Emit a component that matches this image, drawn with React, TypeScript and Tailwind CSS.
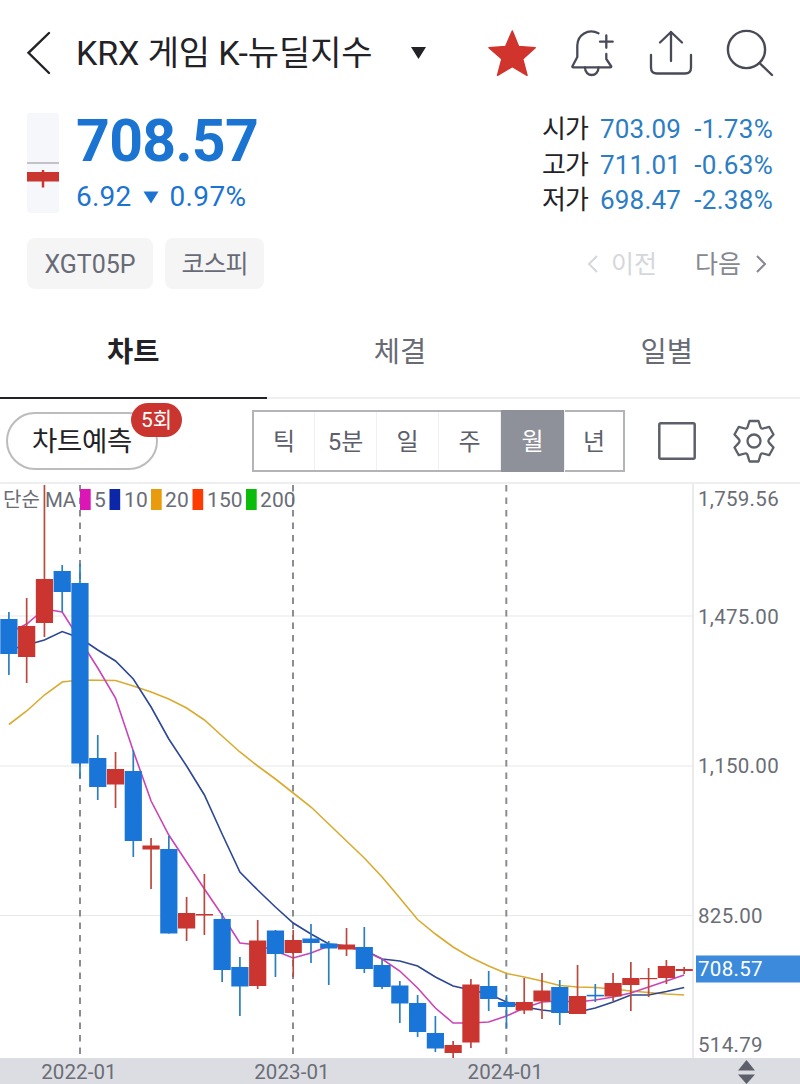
import React, { useState } from 'react';

type Candle = [open: number, close: number, high: number, low: number, dir: 'up' | 'down'];

const UP = '#cb352f';
const DOWN = '#1976d8';
const STEP = 17.77;
const FIRST_X = 8.9;

// body top, body bottom, wick top, wick bottom
const CANDLES: Candle[] = [
    [619, 654, 612, 675, 'down'],
    [626, 657, 598, 683, 'up'],
    [579, 623, 485, 637, 'up'],
    [571, 592, 565, 612, 'down'],
    [583, 763.5, 564, 778, 'down'],
    [758, 787, 735, 800, 'down'],
    [769, 784.5, 752, 808, 'up'],
    [771, 841, 750, 857, 'down'],
    [845.5, 849.5, 838, 889, 'up'],
    [849, 933.5, 836, 933.5, 'down'],
    [913, 928.5, 897, 941, 'up'],
    [914, 915.5, 874, 935, 'up'],
    [919, 970, 913, 982, 'down'],
    [967, 986.5, 957, 1016, 'down'],
    [940.5, 986, 920, 989, 'up'],
    [930.5, 954, 930, 977, 'down'],
    [940, 953, 930, 977, 'up'],
    [938.5, 943, 924, 963, 'down'],
    [943.5, 948.5, 941, 985, 'down'],
    [944.5, 949.5, 928, 956, 'up'],
    [947, 969, 927, 973, 'down'],
    [965, 987, 959, 989, 'down'],
    [985.5, 1003.5, 981, 1023, 'down'],
    [1003, 1032, 995, 1037, 'down'],
    [1033, 1048.5, 1016, 1052, 'down'],
    [1045, 1053, 1041, 1058, 'up'],
    [984.5, 1042.5, 979, 1048, 'up'],
    [986, 999, 971, 1011, 'down'],
    [1002, 1007, 995, 1028, 'down'],
    [1002, 1010.5, 978, 1014, 'up'],
    [990.5, 1001.5, 973, 1019, 'up'],
    [987, 1013, 980, 1025, 'down'],
    [996, 1014, 965, 1014, 'up'],
    [994.8, 996.4, 984, 1002, 'down'],
    [983, 996.5, 973, 1001, 'up'],
    [978, 985, 962, 1011, 'up'],
    [978, 979.2, 968, 997, 'up'],
    [966, 978, 960, 984, 'up'],
    [969, 971, 967, 974, 'up'],
];

const MA5 = [633, 624, 609, 612, 640, 668, 698, 751, 801, 835, 862, 889, 915, 943, 945, 951, 958, 953, 946, 947, 951, 959, 971, 988, 1008, 1023, 1023, 1022, 1016, 1008, 1002, 1001, 1002, 1000, 997, 993, 987, 981, 975];
const MA10 = [650, 645, 640, 631.5, 638, 650, 661, 679, 707, 739, 766, 795, 834, 872, 890, 907, 923, 934, 944, 946, 950, 959, 961, 966, 977, 986, 990, 994, 1002, 1007, 1010, 1012, 1012, 1008, 1002, 995, 995, 991.5, 987.5];
const MA20 = [724.5, 711, 695, 682, 680, 680.3, 680.5, 686, 692, 699, 708, 720, 736, 752, 766, 779, 793, 807, 824, 841, 858, 877, 898, 919.5, 934, 947, 957.5, 966, 973.5, 977, 981, 985.5, 987, 987.5, 989, 991, 992.5, 994, 995];

const GRID = [616, 766, 915.5];
const YEARS = [
    { x: 80, label: '2022-01' },
    { x: 293, label: '2023-01' },
    { x: 506.3, label: '2024-01' },
];
const AXIS = [
    { y: 505.5, label: '1,759.56' },
    { y: 623.5, label: '1,475.00' },
    { y: 773, label: '1,150.00' },
    { y: 922.5, label: '825.00' },
    { y: 1052, label: '514.79' },
];
const LEGEND = [
    { x: 80, textX: 94, color: '#db16b4', label: '5' },
    { x: 109.5, textX: 124, color: '#0c26a8', label: '10' },
    { x: 151, textX: 165, color: '#e89c0c', label: '20' },
    { x: 192.5, textX: 207, color: '#fb3b02', label: '150' },
    { x: 246, textX: 260, color: '#0bbd0b', label: '200' },
];

const QUOTES = [
    { label: '시가', price: '703.09', rate: '-1.73%' },
    { label: '고가', price: '711.01', rate: '-0.63%' },
    { label: '저가', price: '698.47', rate: '-2.38%' },
];

const toPoints = (values: number[]) =>
    values.map((y, i) => `${(FIRST_X + i * STEP).toFixed(1)},${y}`).join(' ');

const Header = () => (
    <header className="flex h-[106px] shrink-0 items-center text-[#484b57]">
        <button className="ml-[24px] w-[52px]">
            <svg width="28" height="44" viewBox="24 31 28 44" fill="none" stroke="#222227" strokeWidth="2.4" strokeLinecap="round">
                <path d="M49 33 28.500 52.800 49 73" />
            </svg>
        </button>
        <h1 className="w-[334px] whitespace-nowrap text-[34px] leading-none tracking-[-0.1px] text-[#222227]">
            KRX 게임 K-뉴딜지수
        </h1>
        <svg width="18" height="14" viewBox="410 46 18 14">
            <path d="M411 47h15l-7.500 12z" fill="#222227" />
        </svg>
        <button className="ml-[58px]">
            <svg width="52" height="50" viewBox="486 28 52 50">
                <path
                    d="m512.300 31 6.300 15.600 16.600 1.200-12.500 11.200 4.300 16.300-14.700-8.700-14.700 8.700 4.300-16.300L489 47.800l16.600-1.200z"
                    fill="#d0342c"
                    stroke="#d0342c"
                    strokeWidth="1.500"
                    strokeLinejoin="round"
                />
            </svg>
        </button>
        <button className="ml-[31px]">
            <svg width="46" height="50" viewBox="569 28 46 50" fill="none" stroke="currentColor" strokeWidth="2.300" strokeLinecap="round" strokeLinejoin="round">
                <path d="M598.500 33.200C588 28 577.500 35 577.300 45.500V57l-5 9.500q0 .8.800.8h37.200q1 0 1-.8L606.300 59v-5" />
                <path d="M606.300 35.500v12.300M600 41.700h12.700M585 67.500c0 10 13.500 10 13.500 0" />
            </svg>
        </button>
        <button className="ml-[32px]">
            <svg width="48" height="50" viewBox="647 28 48 50" fill="none" stroke="currentColor" strokeWidth="2.300" strokeLinecap="round" strokeLinejoin="round">
                <path d="M671 61V32M660 42.500 671 32l11 10.500M651 55v12.500q0 6 6 6h28q6 0 6-6V55" />
            </svg>
        </button>
        <button className="ml-[30px]">
            <svg width="50" height="50" viewBox="725 28 50 50" fill="none" stroke="currentColor" strokeWidth="2.400" strokeLinecap="round">
                <circle cx="746.500" cy="49.500" r="18.600" />
                <path d="m759.500 63 12.500 12" />
            </svg>
        </button>
    </header>
);

const Quote = () => (
    <section className="flex h-[118px] shrink-0 pl-[27px] pr-[27px] pt-[7px]">
        <svg className="shrink-0" width="32" height="100" viewBox="0 0 32 100">
            <rect width="32" height="100" rx="3" fill="#f5f7fb" />
            <path d="M0 50h32" stroke="#8c8f96" />
            <path d="M0 59h32v9.500H0z" fill={UP} />
            <path d="M16 57v17.500" stroke={UP} strokeWidth="2.500" />
        </svg>
        <div className="ml-[17px] flex-1 text-[#1b74d2]">
            <div className="mt-[1px] h-[58px] text-[59px] font-bold leading-[54px] tracking-[-0.7px]">708.57</div>
            <div className="flex h-[50px] items-center text-[28px] leading-none">
                <span className="tracking-[0.2px]">6.92</span>
                <svg className="ml-[12px] mr-[10px]" width="16" height="13" viewBox="0 0 16 13">
                    <path d="M.5.5h15L8 12.500z" fill="currentColor" />
                </svg>
                <span className="tracking-[0.4px]">0.97%</span>
            </div>
        </div>
        <div className="flex flex-col text-[26px] leading-[35.500px] -mt-px">
            {QUOTES.map(q => (
                <div key={q.label} className="flex h-[35.500px] whitespace-nowrap text-[#2b7dc4]">
                    <span className="w-[58px] tracking-[-0.8px] text-[#222227]">{q.label}</span>
                    <span className="w-[93px] tracking-[0.2px]">{q.price}</span>
                    <span className="w-[80px] text-right tracking-[0.3px]">{q.rate}</span>
                </div>
            ))}
        </div>
    </section>
);

const Chips = () => (
    <section className="flex h-[82px] shrink-0 items-start pt-[14px] text-[25px] text-[#686b75]">
        <span className="ml-[27px] flex h-[51px] w-[126px] items-center justify-center rounded-[8px] bg-[#f5f5f6] pt-[2px]">XGT05P</span>
        <span className="ml-[12px] flex h-[51px] w-[99px] items-center justify-center rounded-[8px] bg-[#f5f5f6] pt-[2px] tracking-[-1px]">코스피</span>
        <div className="ml-auto mr-[33px] flex h-[51px] items-center">
            <svg width="12" height="18" viewBox="0 0 12 18" fill="none" stroke="#d5d7db" strokeWidth="2">
                <path d="M10 1 2 9l8 8" />
            </svg>
            <span className="ml-[12px] w-[84px] pt-[2px] text-[#d5d7db]">이전</span>
            <span className="w-[50px] pt-[2px] text-[#868990]">다음</span>
            <svg className="ml-[10px]" width="12" height="18" viewBox="0 0 12 18" fill="none" stroke="#868990" strokeWidth="2">
                <path d="m2 1 8 8-8 8" />
            </svg>
        </div>
    </section>
);

const Tabs = () => {
    const [active, setActive] = useState('차트');
    return (
        <nav className="grid h-[93px] shrink-0 grid-cols-3 border-b-2 border-[#eceef0] text-[28.5px]">
            {['차트', '체결', '일별'].map(tab => (
                <button
                    key={tab}
                    onClick={() => setActive(tab)}
                    className={`-mb-[2px] border-b-2 pt-[4px] ${active === tab ? 'border-[#222227] font-bold text-[#222227]' : 'border-transparent text-[#686b75]'}`}
                >
                    {tab}
                </button>
            ))}
        </nav>
    );
};

const Toolbar = () => {
    const [period, setPeriod] = useState('월');
    return (
        <div className="flex h-[85px] shrink-0 items-center border-b-2 border-[#eceef0] pl-[6px]">
            <button className="relative h-[58px] w-[152px] whitespace-nowrap rounded-full border-2 border-[#bcbcbe] pt-[3px] text-[27.5px] tracking-[-0.3px] text-[#222227]">
                차트예측
                <span className="absolute -top-[11px] left-[123px] flex h-[34px] w-[51px] items-center justify-center rounded-full bg-[#cb352f] pt-[2px] text-[21px] tracking-normal text-white">
                    5회
                </span>
            </button>
            <div className="ml-[94px] flex h-[62px] w-[373px] border-2 border-[#b2b4b7] text-[24px] text-[#5d606a]">
                {['틱', '5분', '일', '주', '월', '년'].map(p => (
                    <button
                        key={p}
                        onClick={() => setPeriod(p)}
                        className={`w-[62px] border-r border-[#f0f0f1] pt-[2px] first:w-[61px] last:w-[58px] last:border-r-0 ${period === p ? '-my-[2px] w-[64px] bg-[#8e9199] text-white' : ''}`}
                    >
                        {p}
                    </button>
                ))}
            </div>
            <svg className="ml-[33px]" width="38" height="38" viewBox="0 0 38 38" fill="none" stroke="#5d606a" strokeWidth="2.500">
                <rect x="1.300" y="1.300" width="35.400" height="35.400" rx="1.500" />
            </svg>
            <svg className="ml-[37px]" width="42" height="44" viewBox="733 419 42 44" fill="none" stroke="#5d606a" strokeWidth="2.300" strokeLinejoin="round">
                <path d="M749.500 421h9l2 6.200q.8 1.800 2.500 1.300l6.200-1.700 4.300 7.700-4.300 4.600q-1.500 1.900 0 3.800l4.300 4.600-4.300 7.700-6.200-1.700q-1.700-.5-2.500 1.300l-2 6.700h-9l-2-6.700q-.8-1.800-2.500-1.300l-6.200 1.700-4.300-7.700 4.300-4.600q1.500-1.900 0-3.800l-4.300-4.600 4.300-7.700 6.200 1.700q1.700.5 2.500-1.300z" />
                <circle cx="754" cy="441" r="6.500" />
            </svg>
        </div>
    );
};

const Chart = () => (
    <svg className="block shrink-0" width="800" height="600" viewBox="0 484 800 600" fontSize="20.500" letterSpacing="0.100" fill="#6a6d76">
        {GRID.map(y => (
            <path key={y} d={`M0 ${y}h692`} stroke="#e7e8ea" strokeWidth="1.200" />
        ))}
        <path d="M693 484v574" stroke="#e4e5e8" strokeWidth="1.500" />
        {YEARS.map(({ x }) => (
            <path key={x} d={`M${x} 485v573`} stroke="#8b8d94" strokeWidth="2" strokeDasharray="6.500 6" />
        ))}

        {/* Moving averages */}
        <g fill="none" strokeWidth="1.600">
            <polyline points={toPoints(MA20)} stroke="#d9ab30" />
            <polyline points={toPoints(MA10)} stroke="#2c4793" />
            <polyline points={toPoints(MA5)} stroke="#c944b8" />
        </g>

        {CANDLES.map(([top, bottom, high, low, dir], i) => {
            const x = FIRST_X + i * STEP;
            const color = dir === 'up' ? UP : DOWN;
            return (
                <g key={i}>
                    <path d={`M${x} ${high}V${low}`} stroke={dir === 'up' ? '#b94a40' : '#2c7fbd'} strokeWidth="1.700" />
                    <rect x={x - 8.6} y={top} width="17.200" height={bottom - top} fill={color} />
                </g>
            );
        })}

        {/* Legend */}
        <text x="3" y="506.500" fontSize="20">단순</text>
        <text x="45" y="506.500" fontSize="20.500" letterSpacing="-0.300">MA</text>
        {LEGEND.map(item => (
            <g key={item.label}>
                <rect x={item.x} y="489" width="10.700" height="21" fill={item.color} />
                <text x={item.textX} y="506.500" fontSize="21">{item.label}</text>
            </g>
        ))}

        {AXIS.map(a => (
            <text key={a.label} x="698" y={a.y} letterSpacing="0.300">{a.label}</text>
        ))}
        <rect x="696" y="955.500" width="104" height="27" fill="#3b8adb" />
        <text x="698" y="976" fill="#fff" letterSpacing="0.300">708.57</text>

        {/* Date bar */}
        <rect y="1058" width="800" height="26" fill="#dcdde2" />
        {YEARS.map(({ x, label }) => (
            <text key={label} x={x - 1} y="1079" textAnchor="middle">{label}</text>
        ))}
        <path d="M738 1070.500h17l-8.500-10.500zM738 1074.500h17l-8.500 9.500z" fill="#5d606a" />
    </svg>
);

const App: React.FC = () => (
    <div className="flex h-[1084px] w-[800px] flex-col overflow-hidden bg-white font-[Roboto,'Noto_Sans_CJK_KR',sans-serif]">
        <Header />
        <Quote />
        <Chips />
        <Tabs />
        <Toolbar />
        <Chart />
    </div>
);

export default App;
